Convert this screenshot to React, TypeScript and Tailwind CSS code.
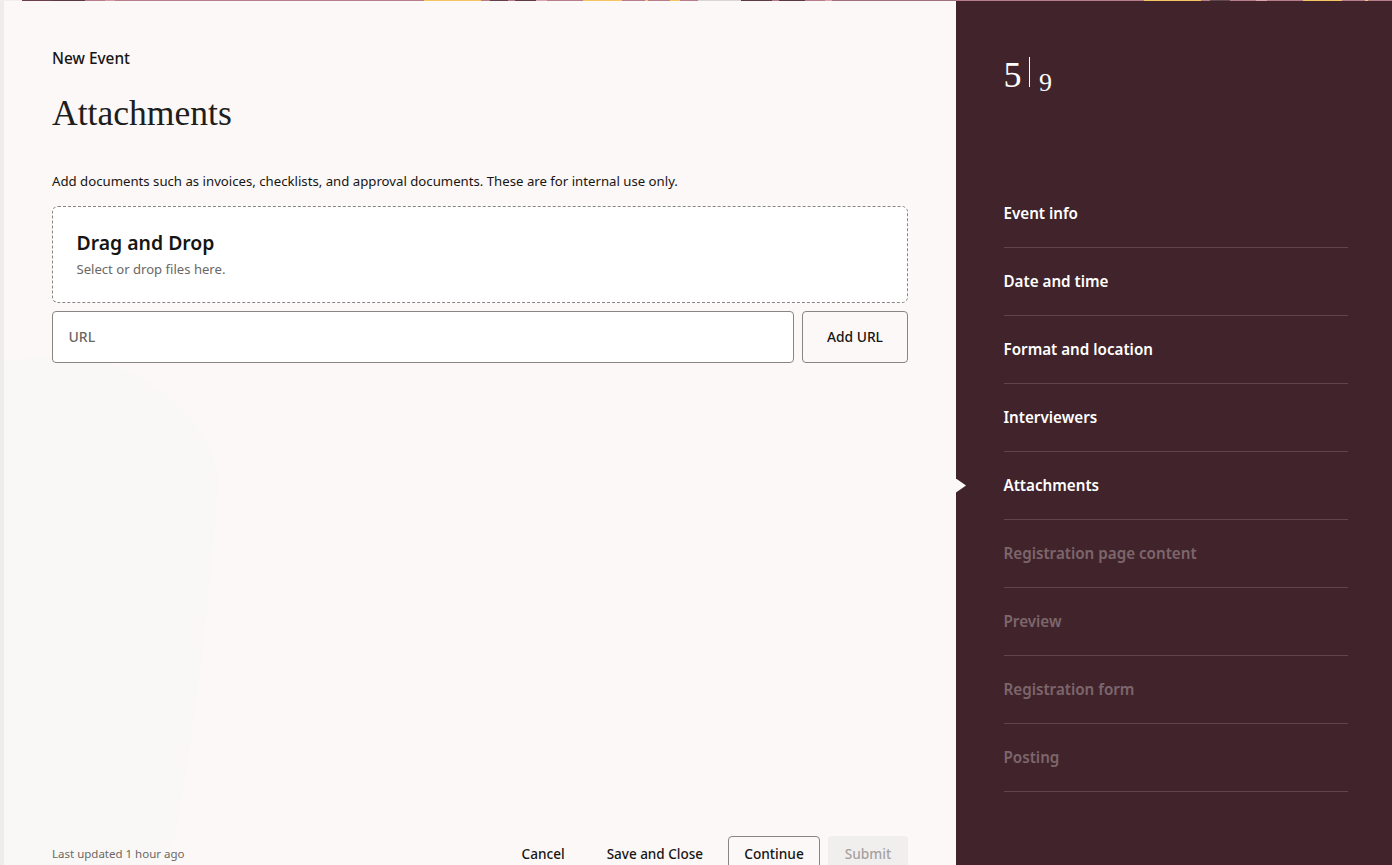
import React from "react";

const sans = "font-['Noto_Sans','Open_Sans',sans-serif]";

// [end x, colour] for the 1px strip along the top of the page
const strip: [number, string][] = [
  [22, "#f1efed"], [52, "#6d3f48"], [85, "#5a3a40"], [105, "#b87d8a"], [115, "#d49aa5"],
  [424, "#b87d8a"], [481, "#f5c662"], [490, "#b87d8a"], [508, "#64404a"], [515, "#b87d8a"],
  [536, "#5f3c45"], [547, "#d8a8b0"], [583, "#b87d8a"], [622, "#f5c662"], [645, "#b87d8a"],
  [648, "#f5c662"], [670, "#b87d8a"], [680, "#f5c662"], [698, "#b87d8a"], [741, "#dcd6d2"],
  [772, "#5f3c45"], [779, "#b87d8a"], [805, "#5a3a40"], [825, "#b87d8a"], [832, "#d8a8b0"],
  [956, "#a0707c"], [1144, "#b87d8a"], [1201, "#f5c662"], [1210, "#b87d8a"], [1230, "#5f4a4e"],
  [1256, "#b87d8a"], [1267, "#d8a8b0"], [1303, "#b87d8a"], [1342, "#f5c662"], [1365, "#b87d8a"],
  [1368, "#f5c662"], [1392, "#b87d8a"],
];

const steps = [
  { label: "Event info", done: true },
  { label: "Date and time", done: true },
  { label: "Format and location", done: true },
  { label: "Interviewers", done: true },
  { label: "Attachments", done: true, current: true },
  { label: "Registration page content" },
  { label: "Preview" },
  { label: "Registration form" },
  { label: "Posting" },
];

const rings = Array.from({ length: 30 }, (_, i) => 10 + i * 8);

export default function App() {
  return (
    <div className={`relative flex h-[865px] w-[1392px] overflow-hidden bg-[#fcf8f7] text-[#161513] ${sans}`}>
      {/* Top colour strip */}
      <div className="absolute left-0 right-0 top-0 z-10 flex h-px">
        {strip.map(([end, c], i) => (
          <div key={i} style={{ width: end - (i ? strip[i - 1][0] : 0), backgroundColor: c }} />
        ))}
      </div>

      <div className="w-1 shrink-0 bg-[#eeedeb]" />

      {/* Main form */}
      <main className="relative flex w-[952px] shrink-0 flex-col pl-12 pr-12">
        {/* faint background texture */}
        <svg className="absolute left-0 top-[350px] h-[515px] w-[952px]" viewBox="0 0 952 515" fill="none">
          <path d="M0 12 C50 2 90 6 125 22 C170 42 205 80 215 125 C205 260 190 400 165 515 L0 515 Z" fill="#faf8f6" />
          {rings.map((r) => (
            <ellipse key={r} cx="450" cy="290" rx={r * 0.8} ry={r} stroke="#fbf8f6" strokeWidth="1" />
          ))}
        </svg>

        <div className="relative flex h-full flex-col">
          <div className="pt-[49px] text-[15.4px] font-medium leading-[20px]">New Event</div>
          <h1 className="mt-[22px] font-['Liberation_Serif',serif] text-[35.6px] leading-[44px] text-[#201e1c]">
            Attachments
          </h1>
          <p className="mt-[37px] text-[13.2px] leading-[18px]">
            Add documents such as invoices, checklists, and approval documents. These are for internal use only.
          </p>

          <div className="mt-[16px] flex h-[97px] flex-col rounded-[6px] border border-dashed border-[#8a8583] bg-white pl-[23.5px] pt-[23px]">
            <div className="text-[19.4px] font-semibold leading-[26px]">Drag and Drop</div>
            <div className="mt-[4px] text-[13.1px] leading-[18px] text-[#6b6764]">Select or drop files here.</div>
          </div>

          <div className="mt-2 flex gap-2">
            <div className="flex h-[52px] flex-1 items-center rounded-[4px] border border-[#8a8583] bg-white pb-px pl-[15.5px] text-[14px] font-medium text-[#6b6764]">
              URL
            </div>
            <button className="h-[52px] w-[106px] rounded-[4px] border border-[#8a8583] text-[13.8px] font-medium">
              Add URL
            </button>
          </div>

          {/* Footer */}
          <div className="mt-auto flex h-[29px] items-start justify-between">
            <span className="pt-[9px] text-[11.5px] leading-[18px] text-[#6b6764]">Last updated 1 hour ago</span>
            <div className="flex items-start">
              <button className="mt-[8px] text-[13.6px] font-medium leading-[20px]">Cancel</button>
              <button className="ml-[42px] mt-[8px] text-[13.5px] font-medium leading-[20px]">Save and Close</button>
              <button className="ml-[25px] h-[40px] w-[92px] rounded-[4px] border border-[#8a8583] pb-[4px] text-[13.7px] font-medium">
                Continue
              </button>
              <button className="ml-2 h-[40px] w-[80px] rounded-[4px] bg-[#f1efed] pb-[4px] text-[13.7px] font-medium text-[#a6a2a0]">
                Submit
              </button>
            </div>
          </div>
        </div>
      </main>

      {/* Step rail */}
      <aside className="relative flex w-[436px] shrink-0 flex-col bg-[#41242b] pl-[47.5px] pr-11 text-white">
        <div className="flex h-[180px] items-start pt-[56px] font-['Liberation_Serif',serif]">
          <span className="text-[36px] leading-[38px]">5</span>
          <span className="ml-[7px] mt-[1px] h-[30px] w-[1.5px] bg-white" />
          <span className="ml-[9px] mt-[13px] text-[26px] leading-[28px]">9</span>
        </div>
        <nav className="flex flex-col">
          {steps.map((s) => (
            <div
              key={s.label}
              className={`relative flex h-[68px] items-center border-b border-[#5f444a] text-[15.2px] font-semibold ${
                s.done ? "text-white" : "text-[#7d666c]"
              }`}
            >
              {s.current && (
                <span className="absolute left-[-47.5px] h-[14px] w-[10px] bg-[#fcf8f7] [clip-path:polygon(0_0,100%_50%,0_100%)]" />
              )}
              {s.label}
            </div>
          ))}
        </nav>
      </aside>
    </div>
  );
}
